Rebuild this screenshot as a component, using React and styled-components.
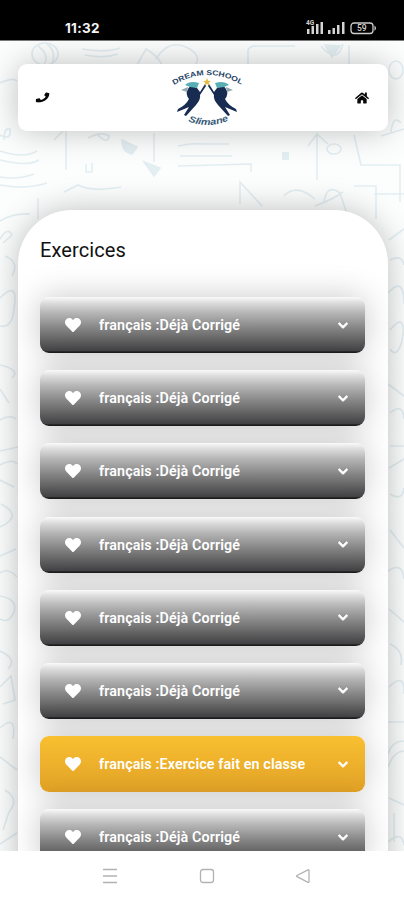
import React from 'react';
import styled, { createGlobalStyle } from 'styled-components';
import { FaChevronDown, FaHeart, FaHome, FaPhone } from 'react-icons/fa';

const GlobalStyle = createGlobalStyle`
  * {
    box-sizing: border-box;
  }

  body {
    margin: 0;
    background: #fff;
    font-family: Roboto, 'Liberation Sans', sans-serif;
    overflow: hidden;
  }
`;

// Phone screen
const Screen = styled.div`
  width: 404px;
  height: 900px;
  display: flex;
  flex-direction: column;
  overflow: hidden;
`;

// System status bar
const StatusBar = styled.div`
  flex: 0 0 40px;
  display: flex;
  align-items: flex-end;
  justify-content: space-between;
  padding: 0 25px 4px 65px;
  background: #000;
  color: #f4f4f4;
`;

const Clock = styled.span`
  font-family: Inter, sans-serif;
  font-size: 13.5px;
  line-height: 15px;
  font-weight: 700;
  letter-spacing: 0.3px;
`;

const StatusIcons = styled.svg`
  width: 74px;
  height: 17px;
`;

const Page = styled.main`
  position: relative;
  isolation: isolate;
  flex: 1;
  min-height: 0;
  padding: 23px 16px 0 18px;
  border-top: 1px solid #777;
  background: #fcfdfd;
  overflow: hidden;
`;

const Doodles = styled.svg`
  position: absolute;
  inset: 0;
  z-index: -1;
  width: 404px;
  height: 811px;
  fill: none;
  stroke: #cfe3ea;
  stroke-width: 1.6;
  opacity: 0.55;
`;

const Header = styled.header`
  height: 67px;
  display: flex;
  align-items: center;
  justify-content: space-between;
  padding: 0 18px;
  border-radius: 9px;
  background: #fff;
  box-shadow: 0 0 32px rgba(0, 0, 0, 0.25);
`;

const IconButton = styled.button`
  display: flex;
  width: 15px;
  padding: 0;
  border: none;
  background: none;
  color: #080808;
  font-size: ${props => props.$size}px;
`;

const PhoneIcon = styled(FaPhone)`
  transform: rotate(8deg) scaleY(0.88);
`;

const Logo = styled.svg`
  width: 78px;
  height: 62px;
  margin: -2px 0 0 7px;
`;

// Main panel
const Panel = styled.section`
  height: 760px;
  margin-top: 79px;
  padding: 26px 23px 0 22px;
  border-radius: 54px 54px 0 0;
  background: #fff;
  box-shadow: 0 0 32px rgba(0, 0, 0, 0.25);
`;

const Title = styled.h1`
  margin: 0 0 33px;
  font-size: 20px;
  line-height: 28px;
  font-weight: 400;
  letter-spacing: 0.1px;
  color: #111;
`;

const List = styled.div`
  display: flex;
  flex-direction: column;
  gap: 17.2px;
`;

const Row = styled.button`
  flex: 0 0 56px;
  display: grid;
  grid-template-columns: 59px 1fr 11px;
  align-items: center;
  padding: 0 17px 0 0;
  border: none;
  border-radius: 9px;
  background: ${props => props.$active
    ? 'linear-gradient(#f9c031, #e1a126)'
    : 'linear-gradient(#fafafa 0%, #dedede 10%, #b6b6b6 28%, #868686 55%, #434345 96%, #1c1c1c 98%)'};
  box-shadow: 0 0 32px rgba(0, 0, 0, 0.22);
  color: #fff;
  font-family: inherit;
  text-align: left;
`;

const Heart = styled(FaHeart)`
  width: 16px;
  height: 16px;
  margin-left: 25px;
`;

const Label = styled.span`
  font-size: 14.3px;
  font-weight: 600;
  letter-spacing: 0.12px;
  white-space: nowrap;
`;

const Chevron = styled(FaChevronDown)`
  width: 10px;
  height: 11px;
  margin-left: 1px;
  stroke: #fff;
  stroke-width: 35px;
`;

// System navigation
const NavBar = styled.nav`
  flex: 0 0 49px;
  display: flex;
  align-items: center;
  justify-content: space-between;
  padding: 0 93px 0 102px;
  background: #fff;
`;

const NavIcon = styled.svg`
  width: 16px;
  height: 16px;
  fill: none;
  stroke: #b2b2b2;
  stroke-width: 1.3;
`;

const exercises = [
  { label: 'français :Déjà Corrigé' },
  { label: 'français :Déjà Corrigé' },
  { label: 'français :Déjà Corrigé' },
  { label: 'français :Déjà Corrigé' },
  { label: 'français :Déjà Corrigé' },
  { label: 'français :Déjà Corrigé' },
  { label: 'français :Exercice fait en classe', active: true },
  { label: 'français :Déjà Corrigé' },
];

const Student = () => (
  <>
    <path d="M37 18 L32 26 L29 22 Q22 18 20 23 Q17 28 21 33 Q18 39 10 43 L9 46 L21 41 L16 49 L18 50 L28 39 Q33 33 32 29 L38 20Z" fill="#172c50" />
    <path d="M17 19 Q22 14 31 17 L29 22 L22 21Z" fill="#58aeb5" />
    <path d="M13 24 L20 21 L19 26Z" fill="#91a9b0" />
  </>
);

const SchoolLogo = () => (
  <Logo viewBox="0 0 78 62">
    <defs>
      <path id="top-arc" d="M6 19 Q39 -1 74 19" />
      <path id="bottom-arc" d="M20 55 Q41 64 64 53" />
    </defs>
    <text fontFamily="Liberation Sans" fontSize="7.2" fontWeight="700" fill="#244266">
      <textPath href="#top-arc" textLength="71" lengthAdjust="spacingAndGlyphs">DREAM SCHOOL</textPath>
    </text>
    <Student />
    <g transform="translate(78 0) scale(-1 1)">
      <Student />
    </g>
    <path d="M39 12 L40.2 14.8 L43 15 L40.8 16.8 L41.5 19.5 L39 18 L36.5 19.5 L37.2 16.8 L35 15 L37.8 14.8Z" fill="#e5bd40" />
    <text fontFamily="Liberation Sans" fontSize="9" fontStyle="italic" fontWeight="700" fill="#385b78">
      <textPath href="#bottom-arc" textLength="42" lengthAdjust="spacingAndGlyphs">Slimane</textPath>
    </text>
  </Logo>
);

const Background = () => (
  <Doodles viewBox="0 0 404 811">
    <ellipse cx="45" cy="13" rx="13" ry="11" />
    <path d="M38 5 Q50 14 44 24 M46 2 Q57 10 52 23" />
    <path d="M82 8 Q105 12 120 7 M85 14 Q104 18 118 13" />
    <path d="M137 24 L146 8 Q158 15 162 24 M156 18 Q169 -3 188 7 Q201 14 196 23" />
    <path d="M248 23 V9 Q251 4 257 5 H295 M349 4 V27 M321 5 Q337 24 343 3" />
    <path d="M325 4 L340 5 L332 16Z" fill="#d2e4ea" />
    <ellipse cx="396" cy="29" rx="7" ry="9" />
    <path d="M0 42 Q13 36 17 40 M0 94 Q12 100 10 88 Q4 86 4 99" />
    <path d="M0 110 Q24 118 37 110 M0 119 Q28 126 39 119 M0 136 Q18 139 34 133 M0 144 Q25 149 47 142" />
    <path d="M54 99 L63 90 M66 90 V129 M88 97 Q102 90 109 95 Q108 104 98 94 M86 123 V131 H92 V122" />
    <path d="M122 99 L137 106 L132 113Q122 111 122 99Z M144 121 L160 127 L154 135Z" fill="#d2e4ea" />
    <path d="M154 92 V121 M178 105 Q192 102 202 103 H229 M180 115 H232 M178 125 Q215 124 251 123 V131" />
    <path d="M64 151 L78 144 Q91 151 121 146 M38 157 V178 M0 180 Q13 172 30 173" />
    <path d="M240 163 V141 L262 165 M284 155 Q296 142 315 158" />
    <path d="M317 139 V93 L308 105 M317 93 L328 103 M354 94 L361 124 H400 V161 M354 145 H376 V178 M374 153 H404" />
    <ellipse cx="334" cy="108" rx="7" ry="5" />
    <path d="M324 162 Q326 142 340 152 L347 173 M315 165 Q334 158 343 151" />
    <path d="M282 111 h7 v8 h-7Z" fill="#d2e4ea" stroke="none" />
    <path d="M391 91 Q393 73 401 82 M381 95 L404 88" />
    <path d="M0 198 Q8 185 12 194 L3 202 M5 215 Q20 221 12 235 M0 257 Q19 238 14 268 Q12 288 0 285 M0 324 Q21 329 12 337 M0 348 L9 362 M0 379 Q10 373 16 378" />
    <path d="M0 410 L18 406 M0 424 Q13 417 17 423 M0 439 L14 446 M1 463 Q24 475 0 486 M0 515 L16 508 M0 532 Q8 526 17 536 M0 555 Q18 558 14 571 Q9 583 0 578" />
    <path d="M0 610 Q18 618 8 628 M0 646 L11 635 L15 659 L3 663 M0 687 Q17 672 13 698 M0 716 L17 729 M5 749 Q20 758 9 771 L3 789 M0 803 L17 792" />
    <path d="M389 199 L404 188 M390 219 Q402 213 404 224 M388 252 Q404 234 404 263 M390 289 Q407 269 402 300 Q397 318 390 308 M388 343 L404 355 M390 372 Q403 361 404 378" />
    <path d="M390 405 H404 M389 427 L404 418 M390 453 Q402 461 404 447 M390 489 L404 507 M388 530 Q402 520 404 538 M389 568 L404 581 M390 603 Q404 609 401 624" />
    <path d="M389 646 Q405 630 404 653 M388 681 H404 M388 713 Q392 700 404 700 M388 726 Q394 710 404 710 M389 757 L404 764 M394 772 V801 M388 801 Q402 789 404 804" />
  </Doodles>
);

const App = () => (
  <>
    <GlobalStyle />
    <Screen>
      <StatusBar>
        <Clock>11:32</Clock>
        <StatusIcons viewBox="0 0 74 17" fill="#d4d4d4">
          <text x="1" y="6" fontFamily="Roboto" fontSize="6.5" fontWeight="700">4G</text>
          <path d="M2 10h2.5v5H2Z M6.5 7H9v8H6.5Z M11 5h2.5v10H11Z M15.5 3H18v12h-2.5Z" />
          <path d="M23 11h2.5v4H23Z M27.5 9H30v6h-2.5Z M32 6h2.5v9H32Z M37 3h2.5v12H37Z" />
          <rect x="46" y="4" width="22" height="10.5" rx="3" fill="none" stroke="#ccc" strokeWidth="1.3" />
          <path d="M69.5 6.5 Q72.5 9 69.5 12Z" />
          <text x="52" y="12.3" fontFamily="Roboto" fontSize="8.5" fontWeight="500">59</text>
        </StatusIcons>
      </StatusBar>

      <Page>
        <Background />
        <Header>
          <IconButton $size={13} aria-label="Téléphone"><PhoneIcon /></IconButton>
          <SchoolLogo />
          <IconButton $size={14} aria-label="Accueil"><FaHome /></IconButton>
        </Header>

        <Panel>
          <Title>Exercices</Title>
          <List>
            {exercises.map((exercise, index) => (
              <Row key={index} $active={exercise.active}>
                <Heart />
                <Label>{exercise.label}</Label>
                <Chevron />
              </Row>
            ))}
          </List>
        </Panel>
      </Page>

      <NavBar>
        <NavIcon viewBox="0 0 16 16"><path d="M1 1.5h14M1 8h14M1 14.5h14" /></NavIcon>
        <NavIcon viewBox="0 0 16 16"><rect x="1.5" y="1.5" width="13" height="13" rx="2.5" /></NavIcon>
        <NavIcon viewBox="0 0 16 16"><path d="M13 1.8 L2 7.5 Q1 8 2 8.6 L13 14.3 Q14 14.5 14 13.4 V2.7 Q14 1.5 13 1.8Z" /></NavIcon>
      </NavBar>
    </Screen>
  </>
);

export default App;
